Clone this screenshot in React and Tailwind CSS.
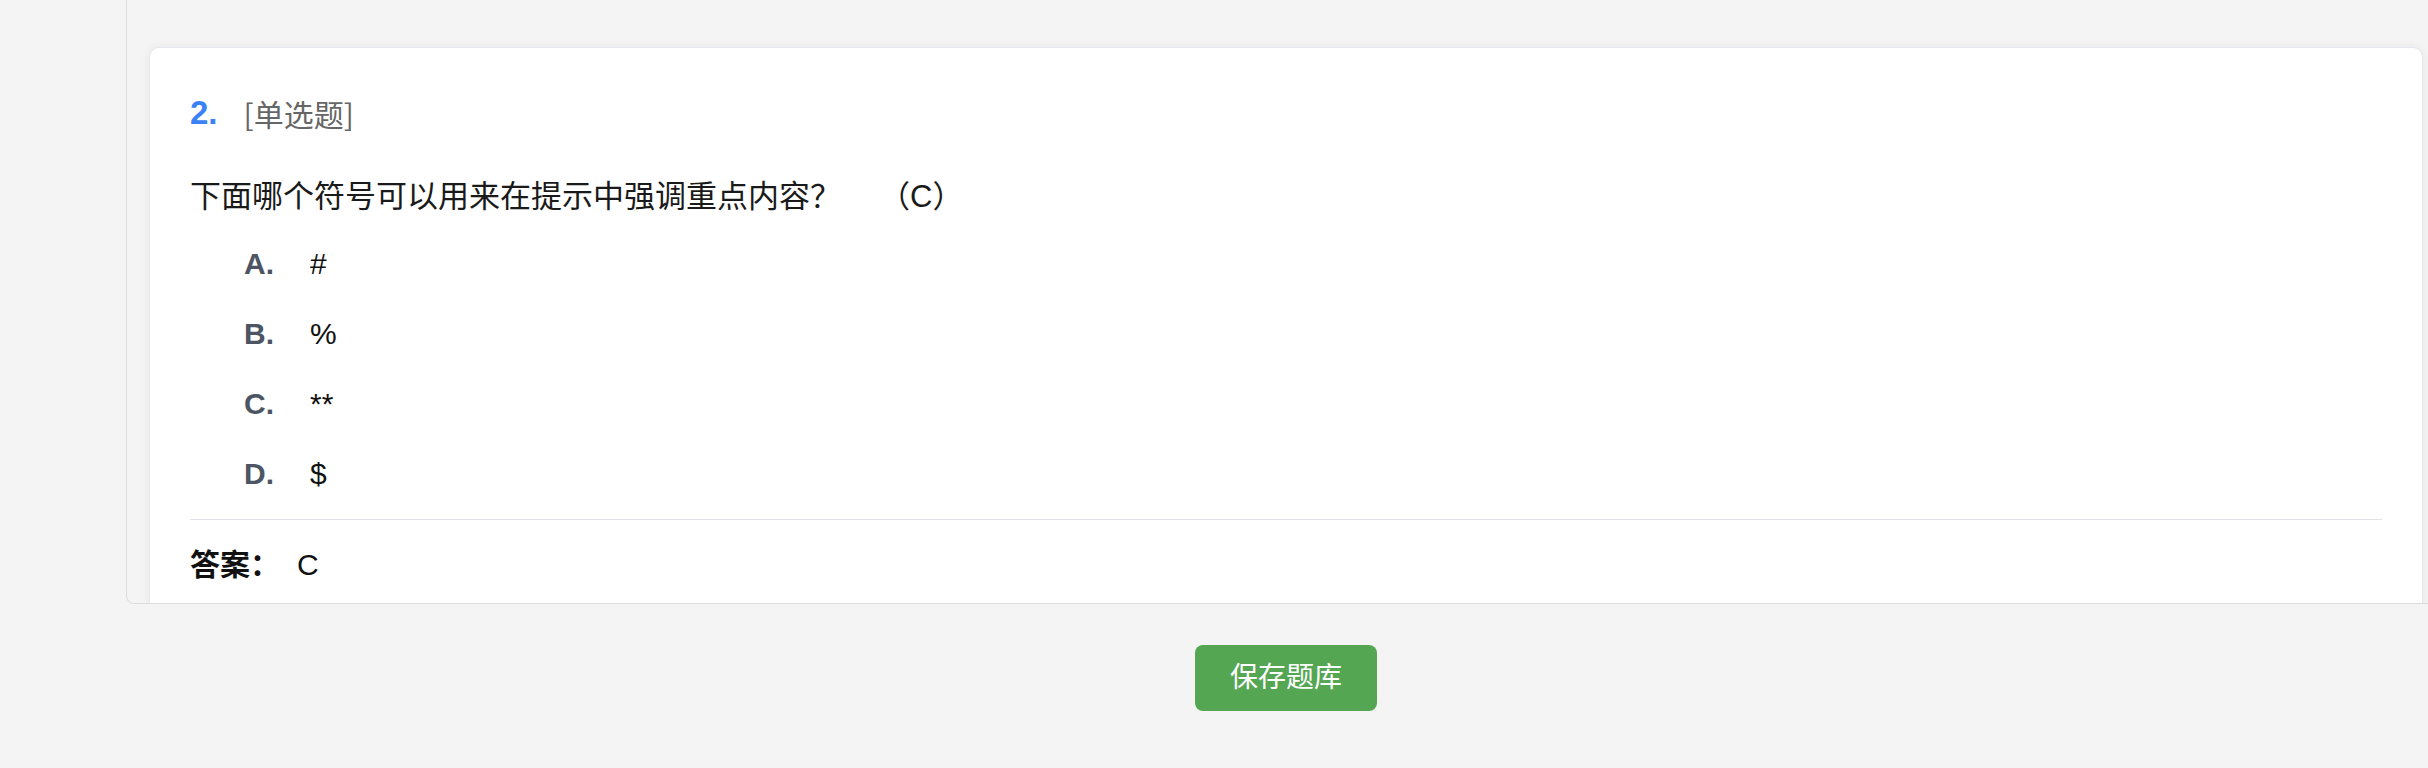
export default function App() {
  const options = [
    { key: 'A.', text: '#' },
    { key: 'B.', text: '%' },
    { key: 'C.', text: '**' },
    { key: 'D.', text: '$' },
  ];

  return (
    <div className="w-full h-[768px] overflow-hidden bg-[#f4f4f4] font-['Liberation_Sans','Noto_Sans_CJK_SC',sans-serif]">
      <div className="ml-[126px] w-[2320px] h-[604px] overflow-hidden border-l border-r border-b border-[#dcdcdc] rounded-b-[8px] px-[22px] pt-[47px]">
        <div className="rounded-[10px] border border-[#e4e7ed] bg-white shadow-[0_0_10px_rgba(0,0,0,0.06)] px-[40px] pt-[40px] pb-[120px]">
          <div className="h-[50px] flex items-center">
            <span className="text-[33px] font-bold text-[#3b82f6]">2.</span>
            <span className="ml-[26px] text-[30px] text-[#666666] font-['Noto_Sans_CJK_SC',sans-serif]">[单选题]</span>
          </div>
          <div className="mt-[37px] h-[44px] flex items-center text-[31px] text-[#1a1a1a]">
            <span>下面哪个符号可以用来在提示中强调重点内容？</span>
            <span className="ml-[38px]">（C）</span>
          </div>
          <div className="mt-[22px] pl-[54px] flex flex-col gap-[26px]">
            {options.map((o) => (
              <div key={o.key} className="h-[44px] flex items-center text-[30px]">
                <span className="w-[66px] font-bold text-[#4b5563]">{o.key}</span>
                <span className="text-[#111111]">{o.text}</span>
              </div>
            ))}
          </div>
          <div className="mt-[24px] border-t border-[#dfe2e7]" />
          <div className="mt-[22px] h-[44px] flex items-center text-[30px] text-[#111111]">
            <span className="font-bold">答案：</span>
            <span className="ml-[17px]">C</span>
          </div>
        </div>
      </div>
      <div className="ml-[126px] w-[2320px] flex justify-center pt-[41px]">
        <button className="h-[66px] px-[35px] rounded-[8px] bg-[#54a653] text-white text-[28px]">
          保存题库
        </button>
      </div>
    </div>
  );
}
